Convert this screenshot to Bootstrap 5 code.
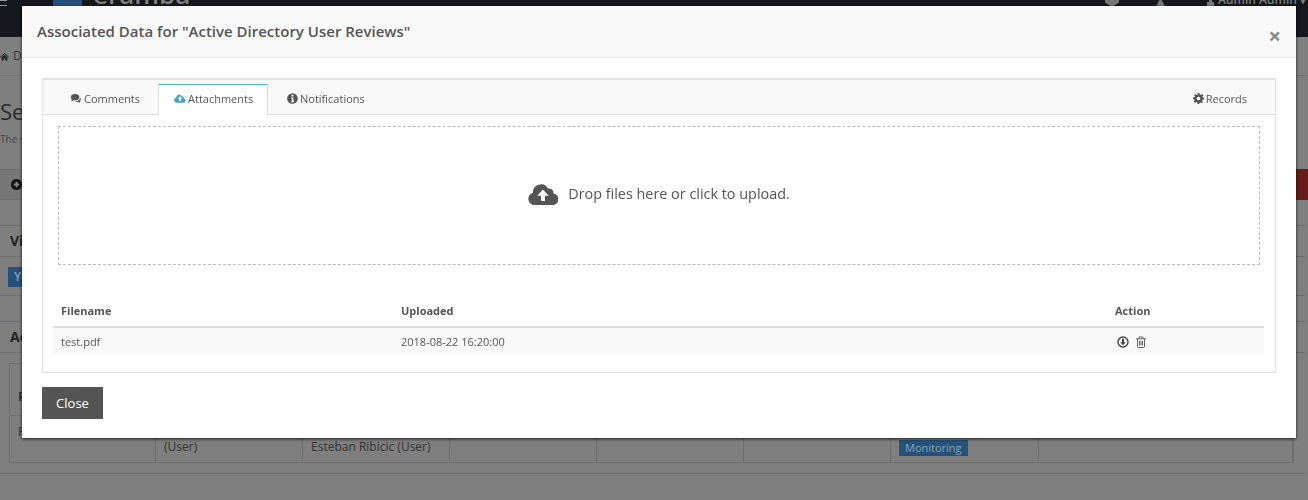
<!DOCTYPE html>
<html lang="en">
<head>
<meta charset="utf-8">
<title>Associated Data</title>
<link href="https://cdn.jsdelivr.net/npm/bootstrap@5.3.0/dist/css/bootstrap.min.css" rel="stylesheet">
<style>
html,body{height:500px;overflow:hidden}
body{font-family:"Open Sans",sans-serif;font-size:12px;color:#333;background:#7f7f7f}
.top-bar{height:37px;background:#14181c;color:#808080;overflow:hidden}
.top-burger{width:7px;height:6px;border-top:1px solid #999;border-bottom:1px solid #999}
.top-logo{width:29px;height:30px;background:#274f7c;margin:-22px 11px 0 46px}
.top-brand{font-size:26px;font-weight:600;line-height:30px;margin-top:-21px}
.top-tail{margin-left:auto}
.top-mark{display:block;flex:none}
.top-user{font-size:12px;font-weight:600;line-height:16px;margin-top:-8px;padding-right:2px;margin-left:4px}
.crumb-row{height:39px;border-bottom:1px solid #707070;font-size:12px}
.page-head{height:93px;padding-top:20px}
.page-title{font-size:22px;line-height:30px;color:#2a2a2a}
.page-sub{font-size:10px;color:#444;line-height:24px;margin-top:1px}
.tool-bar{height:31px;background:#777;border-top:1px solid #6e6e6e;border-bottom:1px solid #6e6e6e;padding-left:11px}
.tool-red{width:12px;height:31px;background:#661c1a;margin-left:auto}
.bg-gap{height:25px}
.bg-panel{margin-right:3px;border-top:1px solid #6e6e6e;border-bottom:1px solid #6e6e6e}
.bg-head{height:31px;padding-left:10px;font-size:14px;font-weight:700;color:#222;border-bottom:1px solid #6e6e6e;line-height:29px}
.bg-note{height:38px;padding:10px 0 0 8px}
.bg-label{background:#24527a;color:#8fa3b6;padding:0 6px;font-size:11px;line-height:16px;display:inline-block}
.bg-note .bg-label{font-size:12px;line-height:20px;font-weight:600}
.bg-tablewrap{padding:10px 11px 10px 9px}
.bg-grid{display:grid;grid-template-columns:146px 147px 147px 147px 147px 147px 148px 1fr;grid-template-rows:52px 46px;border:1px solid #6e6e6e;font-size:12px;color:#333}
.bg-grid>div{border-right:1px solid #6e6e6e;padding:0 8px;display:flex}
.bg-hcell{font-weight:700;border-bottom:1px solid #6e6e6e;align-items:center;padding-top:14px!important}
.bg-cell{align-items:flex-end;padding-bottom:6px!important}
.bg-first{align-items:flex-start;padding-top:7px!important}
.assoc-dialog{width:1274px;max-width:none;margin:6px 0 0 22px}
.assoc-content{height:432px;border:0;border-radius:0;box-shadow:0 1px 3px rgba(0,0,0,.8)}
.assoc-header{height:52px;background:#f9f9f9;border-bottom:1px solid #e5e5e5;border-radius:0;padding:0 15px;align-items:flex-start}
.assoc-title{font-size:15px;font-weight:600;color:#555;line-height:22px;margin-top:14px}
.assoc-x{font-size:22px;font-weight:700;line-height:1;color:#888;margin:18px 0 0 0;background:none;border:0;padding:0}
.assoc-body{padding:20px 20px 0}
.tab-box{height:295px;border:1px solid #e2e2e2;border-top-width:2px}
.tab-strip{height:35px;background:#f9f9f9;border-bottom:1px solid #ddd;font-size:11px;color:#555}
.tab-one{height:34px;padding-top:10px;color:#555;line-height:17px;text-decoration:none;white-space:nowrap;display:flex;gap:2px;align-items:flex-start}
.tab-first{margin-left:27px;width:88px}
.tab-on{margin-top:4px;height:32px;width:110px;padding:5px 0 0 15px;background:#fff;border:1px solid #ddd;border-top:1px solid #4db6d4;border-bottom:0;flex:none}
.tab-third{margin-left:19px}
.tab-rec{margin-left:auto;margin-right:28px}
.tab-ico{width:11px;height:11px;margin-top:3px;flex:none}
.tab-ico-wide{width:12px}
.drop-box{height:139px;margin:11px 15px 0;border:1px dashed #bbb;color:#555;font-size:14.4px;gap:10px;padding-bottom:4px}
.file-list{margin:31px 11px 0 10px;font-size:11px;color:#555}
.file-head{height:32px;border-bottom:2px solid #ddd;font-weight:700;line-height:29px}
.file-row{height:27px;background:#f9f9f9;line-height:28px}
.fc-a{width:340px;padding-left:8px}
.fc-b{width:714px;padding-left:8px}
.fc-c{padding-left:8px}
.act-ico{width:12px;height:12px;margin-right:6px;vertical-align:-2px}
.act-first{margin-left:2px}
.assoc-foot{padding:14px 20px 0}
.btn-assoc-close{height:32px;width:61px;background:#555;color:#fff;border:0;border-radius:0;font-size:13px;line-height:32px;padding:0}
.btn-assoc-close:hover{background:#555;color:#fff}
.page-foot{margin-top:26px;border-bottom:1px solid #6e6e6e}
</style>
</head>
<body>
<div class="top-bar d-flex align-items-start">
  <div class="top-burger"></div>
  <div class="top-logo"></div>
  <div class="top-brand">eramba</div>
  <div class="top-tail d-flex align-items-start">
    <svg class="top-mark" width="14" height="7" viewBox="0 0 14 7" aria-hidden="true"><path fill="#777" d="M0 0h14v2.500L7 7 0 2.500z"/></svg>
    <svg class="top-mark ms-5" width="9" height="6" viewBox="0 0 9 6" style="margin-left:37px!important" aria-hidden="true"><path fill="#777" d="M3.500 0h2L9 6H0z"/></svg>
    <svg class="top-mark" width="7" height="6" viewBox="0 0 7 6" style="margin-left:42px" aria-hidden="true"><path fill="#777" d="M2 0h3v2h2v4H0V2h2z"/></svg>
    <div class="top-user">Admin Admin ▾</div>
  </div>
</div>
<div class="crumb-row d-flex align-items-center">
  <svg width="9" height="9" viewBox="0 0 10 10" class="me-1" aria-hidden="true"><path fill="#222" d="M5 1 0 5.500l.7.7L5 2.600l4.300 3.600.7-.7zM1.800 6v3.500h2.400V7h1.600v2.500h2.400V6L5 3.300z"/></svg>
  <span>Dashboard</span>
</div>
<div class="page-head">
  <div class="page-title">Security Service Reviews</div>
  <div class="page-sub">The service reviews</div>
</div>
<div class="tool-bar d-flex align-items-center">
  <svg width="11" height="11" viewBox="0 0 12 12" aria-hidden="true"><circle cx="6" cy="6" r="6" fill="#111"/><path stroke="#888" stroke-width="2" d="M6 3v6M3 6h6"/></svg>
  <div class="tool-red"></div>
</div>
<div class="bg-gap"></div>
<div class="bg-panel">
  <div class="bg-head">View</div>
  <div class="bg-note"><span class="bg-label">You</span></div>
</div>
<div class="bg-gap"></div>
<div class="bg-panel">
  <div class="bg-head">Active</div>
  <div class="bg-tablewrap">
    <div class="bg-grid">
      <div class="bg-hcell">Reviews</div><div class="bg-hcell"></div><div class="bg-hcell"></div><div class="bg-hcell"></div><div class="bg-hcell"></div><div class="bg-hcell"></div><div class="bg-hcell"></div><div class="bg-hcell"></div>
      <div class="bg-first">Firewall</div><div class="bg-cell">(User)</div><div class="bg-cell">Esteban Ribicic (User)</div><div></div><div></div><div></div>
      <div class="bg-cell"><span class="bg-label">Monitoring</span></div><div></div>
    </div>
  </div>
</div>
<div class="page-foot"></div>

<div class="modal d-block" tabindex="-1">
  <div class="modal-dialog assoc-dialog">
    <div class="modal-content assoc-content">
      <div class="modal-header assoc-header">
        <h5 class="assoc-title mb-0">Associated Data for "Active Directory User Reviews"</h5>
        <button type="button" class="assoc-x ms-auto" aria-label="Close">×</button>
      </div>
      <div class="assoc-body">
        <div class="tab-box">
          <div class="tab-strip d-flex">
            <a class="tab-one tab-first" href="#">
              <svg class="tab-ico tab-ico-wide" viewBox="0 0 12 12" aria-hidden="true"><ellipse cx="5" cy="4.600" rx="4.600" ry="3.400" fill="#555"/><path fill="#555" d="M1.500 6.500 1 9.300 4 7.600zM10.500 4.800c1.200 1.600.9 3.500-.5 4.400l.7 1.800-2.600-1.300c-1.200.1-2.200-.2-3-.9 3.200.2 5.600-1.600 5.400-4z"/></svg>
              <span>Comments</span>
            </a>
            <a class="tab-one tab-on" href="#">
              <svg class="tab-ico tab-ico-wide" viewBox="0 0 14 11" aria-hidden="true"><path fill="#3fa4c8" d="M3 10.500a3 3 0 0 1-.6-5.900 3.600 3.600 0 0 1 6.900-1.500 2.200 2.200 0 0 1 2.600 2.400A2.600 2.600 0 0 1 11 10.500z"/><path fill="#fff" d="M7 3 4.300 6h1.700v2.500h2V6h1.700z"/></svg>
              <span>Attachments</span>
            </a>
            <a class="tab-one tab-third" href="#">
              <svg class="tab-ico" viewBox="0 0 12 12" aria-hidden="true"><circle cx="6" cy="6" r="5.800" fill="#555"/><path fill="#fff" d="M5 2h2v1.800H5zM4.500 5h2.500v4h.7v1H4.500V9h.8V6h-.8z"/></svg>
              <span>Notifications</span>
            </a>
            <a class="tab-one tab-rec" href="#">
              <svg class="tab-ico" viewBox="0 0 12 12" aria-hidden="true"><path fill="#555" fill-rule="evenodd" d="M5 0h2l.3 1.600 1.100.5L9.800 1.200l1.400 1.400-.9 1.400.5 1.100L12 5v2l-1.600.3-.5 1.100.9 1.400-1.400 1.400-1.400-.9-1.100.5L7 12H5l-.3-1.600-1.100-.5-1.400.9L.8 9.400l.9-1.400-.5-1.100L0 7V5l1.600-.3.5-1.100-.9-1.400L2.600 1.200l1.400.9 1.100-.5zM6 4a2 2 0 1 0 0 4 2 2 0 0 0 0-4z"/></svg>
              <span>Records</span>
            </a>
          </div>
          <div class="drop-box d-flex align-items-center justify-content-center">
            <svg width="30" height="22" viewBox="0 0 30 22" aria-hidden="true"><path fill="#555" d="M6.500 22a6.200 6.200 0 0 1-1.500-12.200 8 8 0 0 1 15-4.300 4.600 4.600 0 0 1 5.500 5A5.800 5.800 0 0 1 24 22z"/><path fill="#fff" d="M15 6.500 9.300 12.800h3.700V18h4v-5.200h3.700z"/></svg>
            <span>Drop files here or click to upload.</span>
          </div>
          <div class="file-list">
            <div class="file-head d-flex">
              <div class="fc-a">Filename</div><div class="fc-b">Uploaded</div><div class="fc-c">Action</div>
            </div>
            <div class="file-row d-flex">
              <div class="fc-a">test.pdf</div><div class="fc-b">2018-08-22 16:20:00</div>
              <div class="fc-c">
                <svg class="act-ico act-first" viewBox="0 0 12 12" aria-hidden="true"><circle cx="6" cy="6" r="5" fill="none" stroke="#444" stroke-width="1.400"/><path fill="#444" d="M5 2.800h2v3.400h1.800L6 9.200 3.200 6.200H5z"/></svg><svg class="act-ico" viewBox="0 0 12 12" aria-hidden="true"><path fill="none" stroke="#666" d="M2.500 3v8a.7.7 0 0 0 .7.5h5.600a.7.7 0 0 0 .7-.5V3M1 2.800h10M4 2.500V1h4v1.500M4.500 5v4.500M6 5v4.500M7.500 5v4.500"/></svg>
              </div>
            </div>
          </div>
        </div>
      </div>
      <div class="assoc-foot">
        <button type="button" class="btn btn-assoc-close">Close</button>
      </div>
    </div>
  </div>
</div>
<script src="https://cdn.jsdelivr.net/npm/bootstrap@5.3.0/dist/js/bootstrap.bundle.min.js"></script>
</body>
</html>
